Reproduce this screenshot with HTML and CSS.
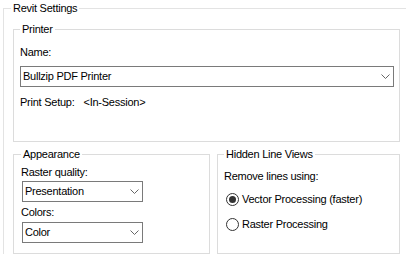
FILE: index.html
```html
<!DOCTYPE html>
<html>
<head>
<title>Revit Settings</title>
<meta name="viewport" content="width=device-width, initial-scale=1.0">
<link rel="stylesheet" href="styles.css">
</head>

<body>
<fieldset class="group outer">
<legend>Revit Settings</legend>

<fieldset class="group printer">
<legend>Printer</legend>
<div class="label">Name:</div>
<div class="combo wide"><span>Bullzip PDF Printer</span><svg width="9" height="5" viewBox="0 0 9 5"><path d="M0.5 0.5 L4.5 4.5 L8.5 0.5" fill="none" stroke="#666" stroke-width="1"/></svg></div>
<div class="label setup">Print Setup:<span class="value">&lt;In-Session&gt;</span></div>
</fieldset>

<div class="row">
<fieldset class="group appearance">
<legend>Appearance</legend>
<div class="label">Raster quality:</div>
<div class="combo small"><span>Presentation</span><svg width="9" height="5" viewBox="0 0 9 5"><path d="M0.5 0.5 L4.5 4.5 L8.5 0.5" fill="none" stroke="#666" stroke-width="1"/></svg></div>
<div class="label colors">Colors:</div>
<div class="combo small last"><span>Color</span><svg width="9" height="5" viewBox="0 0 9 5"><path d="M0.5 0.5 L4.5 4.5 L8.5 0.5" fill="none" stroke="#666" stroke-width="1"/></svg></div>
</fieldset>

<fieldset class="group hidden">
<legend>Hidden Line Views</legend>
<div class="label">Remove lines using:</div>
<div class="radio first"><span class="dot on"></span>Vector Processing (faster)</div>
<div class="radio"><span class="dot"></span>Raster Processing</div>
</fieldset>
</div>
</fieldset>
</body>
</html>
```

FILE: styles.css
```css
body {
 margin:0;
 background:#fff;
 color:#000;
 font-family:"Liberation Sans", Arial, sans-serif;
 font-size:11px;
 line-height:13px;
 letter-spacing:-0.25px;
}
.group {
 box-sizing:border-box;
 margin:0;
 min-width:0;
 border:solid 1px #dcdcdc;
}
.group legend {
 padding:0 2px;
 line-height:13px;
}
.outer {
 margin:2px 0 0 3px;
 width:403px;
 padding:8px 6px 0 7px;
 border-color:#e3e3e3;
 border-right:0;
 border-bottom:0;
}
.printer {
 margin-left:2px;
 width:387px;
 padding:10px 5px 32px 6px;
}
.label { height:13px; white-space:nowrap; }
.setup { margin-top:9px; }
.setup .value { margin-left:9px; }
.combo {
 box-sizing:border-box;
 display:flex;
 align-items:center;
 justify-content:space-between;
 height:21px;
 padding:0 3px 0 2px;
 border:solid 1px #7a7a7a;
 background:#fff;
}
.combo svg { display:block; flex:none; }
.wide { margin-top:7px; }
.row {
 display:flex;
 gap:7px;
 margin:6px 0 0 2px;
}
.appearance {
 width:197px;
 padding:5px 6px 10px 7px;
}
.small {
 width:121px;
 margin:2px 0 0 1px;
}
.colors { margin-top:4px; }
.small.last { margin-top:3px; }
.hidden {
 width:183px;
 padding:9px 6px 10px 6px;
}
.radio {
 display:flex;
 align-items:center;
 height:13px;
 margin-top:12px;
 white-space:nowrap;
}
.radio.first { margin-top:10px; }
.dot {
 box-sizing:border-box;
 flex:none;
 width:13px;
 height:13px;
 margin:0 3px 0 2px;
 border:solid 1px #333;
 border-radius:50%;
 background:#fff;
 display:flex;
 align-items:center;
 justify-content:center;
}
.dot.on::after {
 content:"";
 width:7px;
 height:7px;
 border-radius:50%;
 background:#333;
}
```
